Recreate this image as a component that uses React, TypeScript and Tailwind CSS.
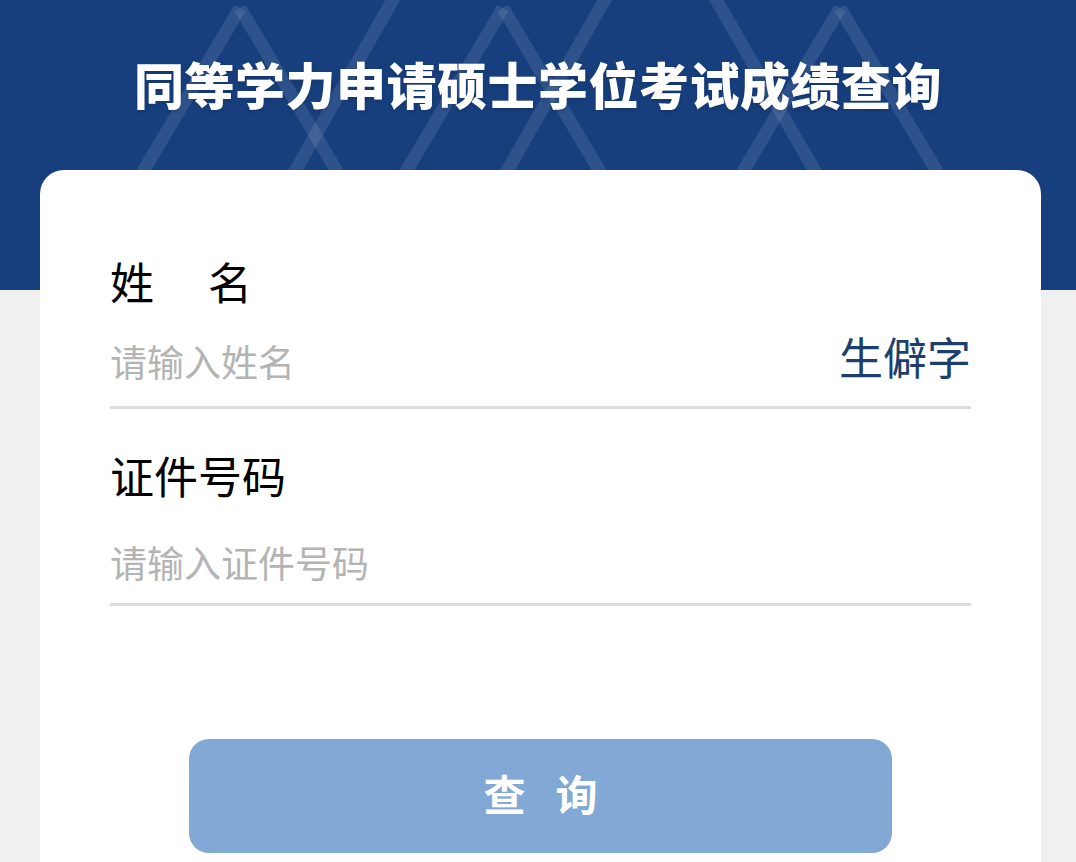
import React from "react";

const font = { fontFamily: '"Noto Sans CJK SC", "Noto Sans", sans-serif' };

function Pattern() {
  const lines: [number, number, number, number][] = [
    [240, 8, 138, 180],
    [240, 8, 342, 180],
    [395, -4, 290, 180],
    [503, 8, 401, 180],
    [503, 8, 605, 180],
    [607, -4, 502, 180],
    [714, -4, 820, 180],
    [840, 8, 738, 180],
    [840, 8, 942, 180],
  ];
  return (
    <svg
      className="absolute inset-0 pointer-events-none"
      width="1076"
      height="290"
      viewBox="0 0 1076 290"
    >
      {lines.map(([x1, y1, x2, y2], i) => (
        <line
          key={i}
          x1={x1}
          y1={y1}
          x2={x2}
          y2={y2}
          stroke="rgba(255,255,255,0.1)"
          strokeWidth="13"
          strokeLinecap="butt"
        />
      ))}
    </svg>
  );
}

export default function App() {
  return (
    <div className="w-[1076px] h-[862px] bg-[#f0f0f0] overflow-hidden" style={font}>
      <div className="relative h-[290px] bg-[#173f7e]">
        <Pattern />
        <h1 className="relative pt-[58px] text-center text-[50px] leading-[50px] font-black text-white tracking-[0.5px] [text-shadow:0_2px_4px_rgba(0,0,0,0.15)]">
          同等学力申请硕士学位考试成绩查询
        </h1>
      </div>
      <div className="relative -mt-[120px] ml-[40px] w-[1001px] h-[720px] bg-white rounded-[24px] px-[70px] pt-[89px]">
        <div className="flex text-[44px] leading-[44px] text-black">
          <span>姓</span>
          <span className="ml-[54px]">名</span>
        </div>
        <div className="mt-[17px] h-[89px] pb-[3px] flex items-center justify-between border-b-[3px] border-[#dcdcdc]">
          <span className="text-[37px] text-[#b4b4b4]">请输入姓名</span>
          <span className="mb-[12px] text-[44px] leading-[44px] text-[#1d3f6e]">生僻字</span>
        </div>
        <div className="mt-[44px] text-[44px] leading-[44px] text-black">证件号码</div>
        <div className="mt-[19px] h-[90px] pt-[6px] flex items-center border-b-[3px] border-[#dcdcdc]">
          <span className="text-[37px] text-[#b4b4b4]">请输入证件号码</span>
        </div>
        <button className="mt-[133px] mx-auto flex items-center justify-center w-[703px] h-[114px] pb-[8px] rounded-[20px] bg-[#82a8d5] text-white text-[42px] font-bold gap-[30px]">
          <span>查</span>
          <span>询</span>
        </button>
      </div>
    </div>
  );
}
